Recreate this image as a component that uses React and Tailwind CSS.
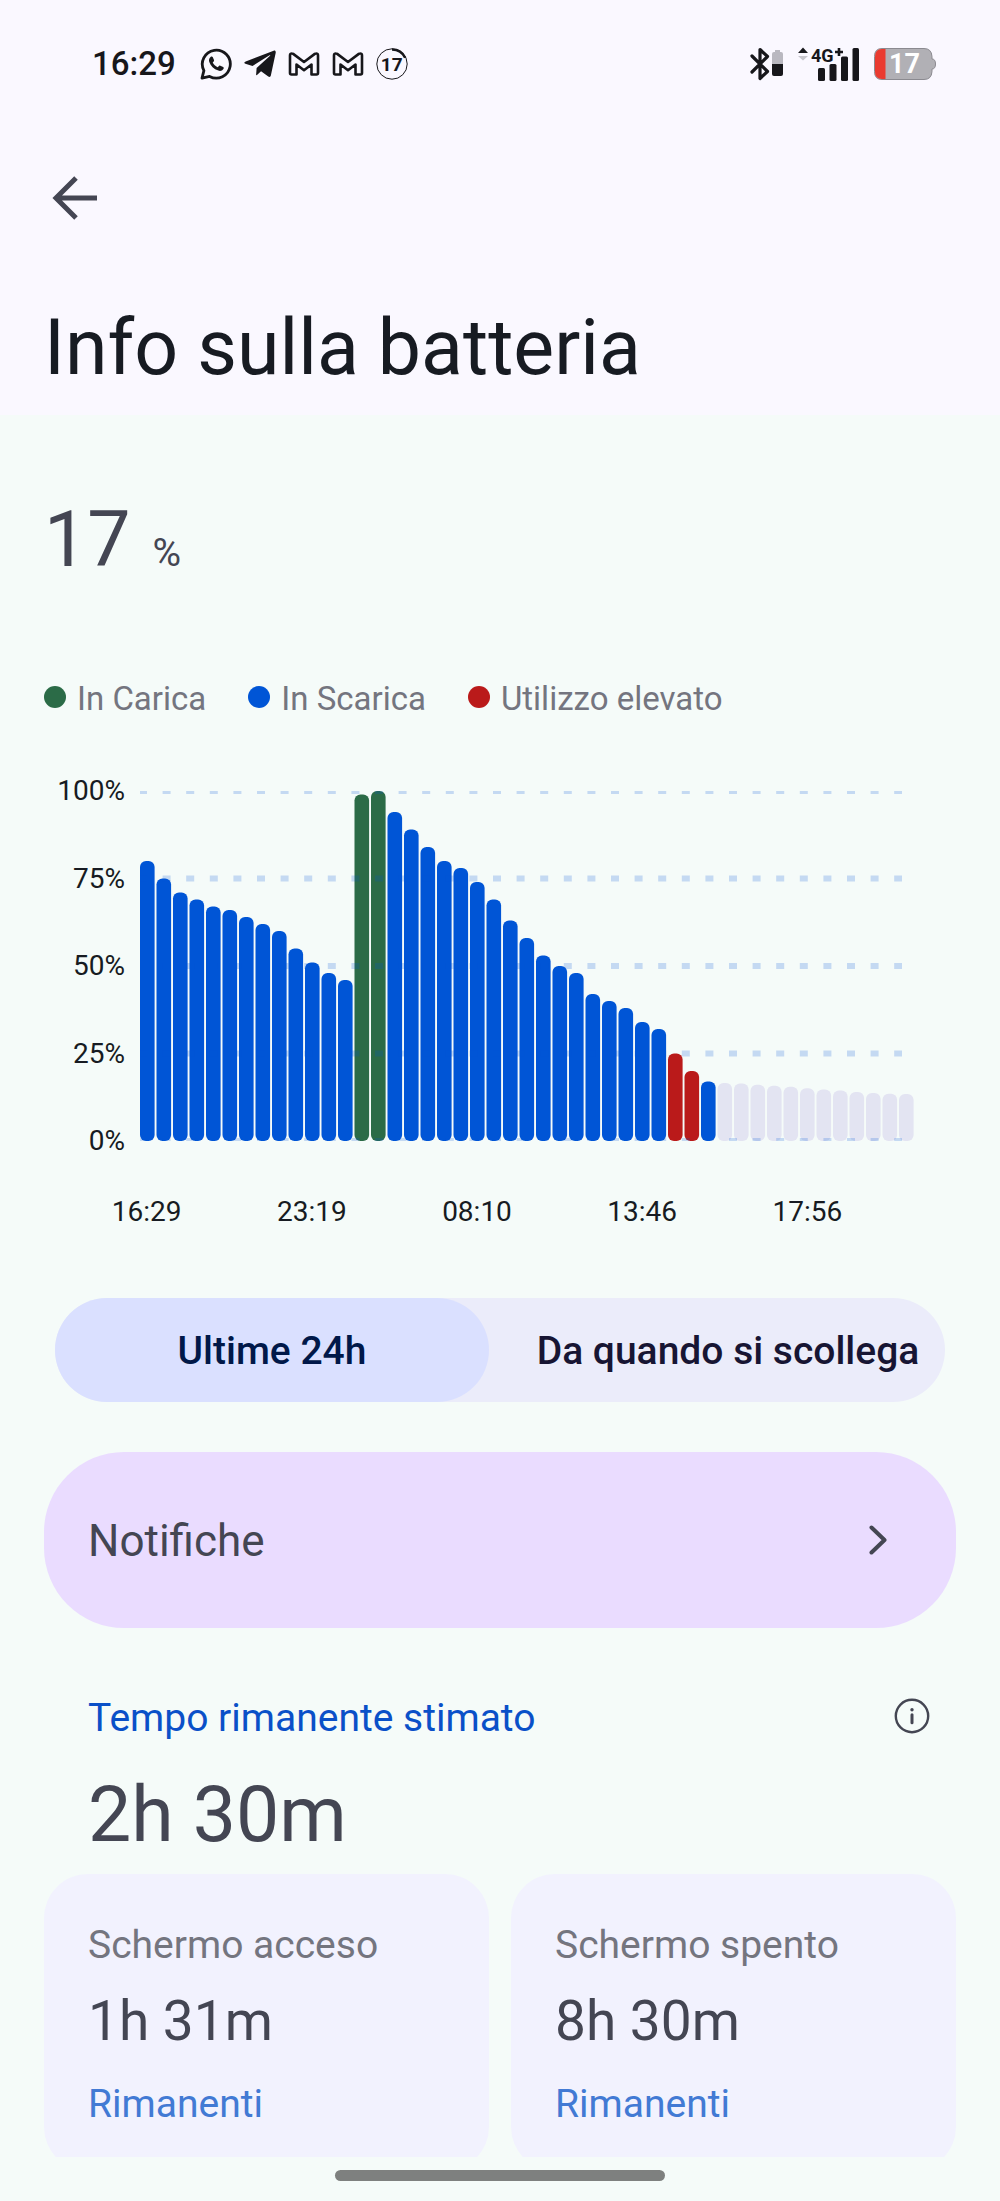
import React, { useState } from "react";
import { FaTelegramPlane } from "react-icons/fa";

const LEGEND = [
  { label: "In Carica", dot: "bg-[#2b6b47]" },
  { label: "In Scarica", dot: "bg-[#0055d6]" },
  { label: "Utilizzo elevato", dot: "bg-[#ba1a1a]" },
];

const BAR_COLORS = {
  discharge: "fill-[#0055d6]",
  charge: "fill-[#2b6b47]",
  high: "fill-[#ba1a1a]",
  forecast: "fill-[#e3e4f2]",
};

const SERIES = [
  { type: "discharge", levels: [80, 75, 71, 69, 67, 66, 64, 62, 60, 55, 51, 48, 46] },
  { type: "charge", levels: [99, 100] },
  {
    type: "discharge",
    levels: [94, 89, 84, 80, 78, 74, 69, 63, 58, 53, 50, 48, 42, 40, 38, 34, 32],
  },
  { type: "high", levels: [25, 20] },
  { type: "discharge", levels: [17] },
  {
    type: "forecast",
    levels: [16.6, 16.4, 16.1, 15.8, 15.5, 15.1, 14.7, 14.4, 14, 13.7, 13.5, 13.4],
  },
];

const BARS = SERIES.flatMap(({ type, levels }) => levels.map((level) => ({ type, level })));

const Y_LABELS = ["100%", "75%", "50%", "25%", "0%"];
const X_LABELS = ["16:29", "23:19", "08:10", "13:46", "17:56"];
const TABS = ["Ultime 24h", "Da quando si scollega"];

const CARDS = [
  { title: "Schermo acceso", value: "1h 31m" },
  { title: "Schermo spento", value: "8h 30m" },
];

const WhatsappIcon = () => (
  <svg className="h-8 w-8" viewBox="0 0 32 32" fill="none">
    <path
      d="M2 30.2l1.9-7.6A14 14 0 1 1 9.6 28.4L2 30.2z"
      stroke="currentColor"
      strokeWidth="2.8"
      strokeLinejoin="round"
    />
    <path
      d="M10.6 8.9c.5-.5 1.7-.6 2.1.2l1.3 2.9c.2.5.1.9-.3 1.4l-1 1.2c1.1 2.2 2.7 3.7 4.9 4.7l1.4-1.3c.4-.4.8-.5 1.3-.3l2.9 1.3c.7.4.7 1.3.2 2-1.1 1.7-3 2.3-5.1 1.6-4.5-1.4-7.7-4.5-9-8.5-.7-2.1-.2-4 1.3-5.2z"
      fill="currentColor"
    />
  </svg>
);

const GmailIcon = () => (
  <svg className="h-6 w-8" viewBox="0 0 31 24" fill="none">
    <path
      d="M1.5 3.6V21q0 1.5 1.5 1.5H8V12.5l7.5 5.7 7.5-5.7V22.5H28q1.5 0 1.5-1.5V3.6q0-2.2-2-2.1-.6 0-1.2.4L15.5 10 4.7 1.9q-.6-.4-1.2-.4-2-.1-2 2.1z"
      stroke="currentColor"
      strokeWidth="2.6"
      strokeLinejoin="round"
    />
  </svg>
);

const LevelRing = () => (
  <div className="relative flex h-8 w-8 items-center justify-center">
    <svg className="absolute inset-0" viewBox="0 0 32 32" fill="none" stroke="currentColor">
      <circle cx="16" cy="16" r="15.2" strokeWidth="1" />
      <path d="M16 1.5A14.5 14.5 0 0 1 29.2 9.8" strokeWidth="2.6" />
    </svg>
    <span className="text-[19px] font-bold leading-none">17</span>
  </div>
);

const BluetoothIcon = () => (
  <svg className="h-[34px] w-[34px]" viewBox="0 0 34 34" fill="none">
    <path
      d="M2 9l15.5 15.5L10 31.5V2.5l7.5 7L2 25"
      stroke="currentColor"
      strokeWidth="3.2"
      strokeLinejoin="round"
      strokeLinecap="round"
    />
    <path d="M25 3h5v2h1q2 0 2 2V17H22V7q0-2 2-2h1z" fill="#b9b8c0" />
    <path d="M22 17h11v10q0 2-2 2h-7q-2 0-2-2z" fill="currentColor" />
  </svg>
);

const SignalIcon = () => (
  <svg className="h-[42px] w-[62px]" viewBox="0 -4 62 42">
    <path d="M0 6l5-5.5L10 6z" fill="currentColor" />
    <path d="M0 9h10l-5 4.5z" fill="#c6c5cc" />
    <text x="13" y="15" className="fill-[#17171b] font-bold" fontSize="18">
      4G
    </text>
    <path d="M41 1v8M37 5h8" stroke="currentColor" strokeWidth="2.6" />
    <rect x="20" y="21" width="7" height="13" rx="1.5" fill="currentColor" />
    <rect x="31.5" y="17" width="7" height="17" rx="1.5" fill="currentColor" />
    <rect x="43" y="9.5" width="7" height="24.5" rx="1.5" fill="currentColor" />
    <rect x="54.5" y="1" width="6.5" height="33" rx="1.5" fill="currentColor" />
  </svg>
);

const BatteryIcon = () => (
  <div className="relative flex h-8 w-[62px] items-center">
    <svg className="absolute inset-0" viewBox="0 0 62 32">
      <path
        d="M8 .5H50q7.5 0 8 8v2.5q3.5 0 3.5 5t-3.5 5v2.5q-.5 8-8 8H8Q.5 31.5.5 23.5v-15Q.5.5 8 .5z"
        fill="#b1b0b5"
        stroke="#8b8a90"
      />
      <path d="M8 1h3.5v30H8Q1 31 1 23.5v-15Q1 1 8 1z" fill="#ea3b30" />
    </svg>
    <span className="relative pl-[15px] text-[27px] font-bold leading-none text-white">17</span>
  </div>
);

const StatusBar = () => (
  <div className="flex h-32 items-center justify-between pl-12 pr-5 text-[#17171b]">
    <div className="flex items-center">
      <span className="text-[33px] font-medium leading-10">16:29</span>
      <div className="ml-6 flex items-center gap-3">
        <WhatsappIcon />
        <FaTelegramPlane className="h-9 w-8" />
        <GmailIcon />
        <GmailIcon />
        <LevelRing />
      </div>
    </div>
    <div className="flex items-center gap-[14px]">
      <BluetoothIcon />
      <SignalIcon />
      <BatteryIcon />
    </div>
  </div>
);

const BatteryChart = () => {
  const pitch = 16.5;
  const scale = 3.5;

  return (
    <div className="mt-14">
      <div className="flex items-center gap-[15px] pr-[42px]">
        <div className="flex h-[382px] w-[81px] flex-col justify-between text-right text-[28px] leading-[32px] text-[#171b22]">
          {Y_LABELS.map((label) => (
            <span key={label}>{label}</span>
          ))}
        </div>
        <svg
          className="h-[350px] min-w-0 flex-1"
          viewBox="0 0 774 350"
          preserveAspectRatio="none"
          role="img"
          aria-label="Livello della batteria"
        >
          {BARS.map((bar, index) => (
            <rect
              key={index}
              x={index * pitch}
              y={350 - bar.level * scale}
              width="14.6"
              height={bar.level * scale}
              rx="6"
              className={BAR_COLORS[bar.type]}
            />
          ))}
          {/* grid goes over the bars, the top and bottom lines are cut in half */}
          {[0, 87.5, 175, 262.5, 350].map((y) => (
            <line
              key={y}
              x1="-1"
              x2="762"
              y1={y}
              y2={y}
              stroke="#0055d6"
              strokeOpacity="0.2"
              strokeWidth="6"
              strokeDasharray="8 15.6"
            />
          ))}
        </svg>
      </div>
      <div className="mt-[39px] grid grid-cols-5 pl-5 pr-[66px] text-center text-[28px] leading-[32px] text-[#171b22]">
        {X_LABELS.map((label) => (
          <span key={label}>{label}</span>
        ))}
      </div>
    </div>
  );
};

const App = () => {
  const [activeTab, setActiveTab] = useState(0);

  return (
    <div className="flex min-h-screen flex-col bg-[#f5fbf9] font-['Roboto',sans-serif] text-[#444653]">
      <header className="bg-[#faf8ff] px-11 pb-[23px]">
        <StatusBar />
        <button aria-label="Indietro" className="mt-12 block pl-2">
          <svg className="h-11 w-[46px]" viewBox="0 0 46 44" fill="none">
            <path d="M45 22H5M24 2L4 22l20 20" stroke="currentColor" strokeWidth="5" />
          </svg>
        </button>
        <h1 className="mt-21 text-[77px] leading-[88px] text-[#171b22]">Info sulla batteria</h1>
      </header>

      <main className="overflow-hidden px-11 pt-[81px]">
        <div className="flex items-baseline gap-[22px] text-[77px] leading-[88px]">
          17
          <span className="text-[39px] leading-[48px]">%</span>
        </div>

        <ul className="mt-[95px] flex gap-[42px] text-[33px] leading-10 text-[#74757f]">
          {LEGEND.map((item) => (
            <li key={item.label} className="flex items-center gap-[11px]">
              <span className={`mb-1 h-[22px] w-[22px] rounded-full ${item.dot}`} />
              {item.label}
            </li>
          ))}
        </ul>

        <BatteryChart />

        <div className="mx-[11px] mt-[70px] grid grid-cols-2 gap-[22px] rounded-full bg-[#ebecfa]">
          {TABS.map((tab, index) => (
            <button
              key={tab}
              onClick={() => setActiveTab(index)}
              className={`h-[104px] whitespace-nowrap rounded-full pt-0.5 text-[39px] font-medium ${
                activeTab === index ? "bg-[#dae0ff] text-[#001849]" : "text-[#171533]"
              }`}
            >
              {tab}
            </button>
          ))}
        </div>

        <button className="mt-[50px] flex h-44 w-full items-center justify-between rounded-[80px] bg-[#eadcff] pl-11 pr-[69px] text-[44px]">
          <span className="pt-0.5">Notifiche</span>
          <svg className="h-[30px] w-[18px]" viewBox="0 0 18 30" fill="none">
            <path
              d="M2.5 2.5L15.5 15 2.5 27.5"
              stroke="currentColor"
              strokeWidth="4"
              strokeLinecap="round"
              strokeLinejoin="round"
            />
          </svg>
        </button>

        <section className="mt-16 pl-11">
          <div className="flex items-start justify-between pr-[26px]">
            <h2 className="text-[39px] leading-[52px] text-[#0a50c8]">Tempo rimanente stimato</h2>
            <button aria-label="Informazioni" className="mt-1.5">
              <svg className="h-9 w-9" viewBox="0 0 36 36" fill="none">
                <circle cx="18" cy="18" r="16.2" stroke="currentColor" strokeWidth="2.4" />
                <circle cx="18" cy="11.8" r="1.7" fill="currentColor" />
                <path d="M18 16.8v8" stroke="currentColor" strokeWidth="3" strokeLinecap="round" />
              </svg>
            </button>
          </div>
          <p className="mt-[27px] text-[77px] leading-[88px]">2h 30m</p>
        </section>

        {/* the cards run on below the visible area */}
        <div className="mt-[15px] -mb-[14px] grid grid-cols-2 gap-[22px]">
          {CARDS.map((card) => (
            <div key={card.title} className="rounded-[44px] bg-[#f2f2fe] px-11 pb-[43px] pt-[47px]">
              <p className="text-[39px] leading-[48px] text-[#74757f]">{card.title}</p>
              <p className="mt-5 text-[55px] leading-[64px]">{card.value}</p>
              <p className="mt-[27px] text-[39px] leading-[48px] text-[#427ad4]">Rimanenti</p>
            </div>
          ))}
        </div>
      </main>

      <footer className="flex justify-center pb-5 pt-[13px]">
        <div className="h-[11px] w-[33%] rounded-full bg-[#7e807f]" />
      </footer>
    </div>
  );
};

export default App;
